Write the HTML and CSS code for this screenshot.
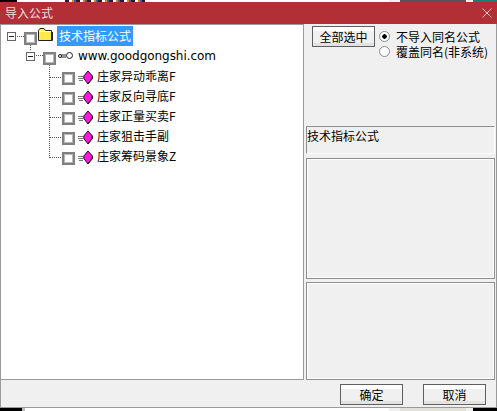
FILE: index.html
```html
<!DOCTYPE html>
<html lang="zh">
<head>
<meta charset="utf-8">
<title>导入公式</title>
<link rel="stylesheet" href="styles.css">
</head>
<body>
<div class="strip strip-top">
  <i class="seg s-black-a"></i><i class="seg s-white-a"></i><i class="seg s-bits"></i><i class="seg s-white-b"></i><i class="seg s-grey"></i><i class="seg s-dark"></i><i class="seg s-grey2"></i><i class="seg s-teal"></i>
</div>
<div class="window">
  <header class="titlebar">
    <span class="title">导入公式</span>
    <svg class="close" width="10" height="10" viewBox="0 0 10 10"><path d="M0.5 0.5L9.5 9.5M9.5 0.5L0.5 9.5" stroke="#e6c4c6" stroke-width="1" fill="none"/></svg>
  </header>
  <div class="main">
    <section class="tree">
      <svg class="tree-lines" width="80" height="140" viewBox="0 0 80 140">
        <g stroke="#555" stroke-width="1" stroke-dasharray="1 1" fill="none">
          <path d="M17 12.500H24"/>
          <path d="M30.500 21V27"/>
          <path d="M36 31.500H43"/>
          <path d="M49.500 41V134"/>
          <path d="M50 53.500H62M50 73.500H62M50 93.500H62M50 113.500H62M50 133.500H62"/>
        </g>
      </svg>
      <div class="row lvl-0">
        <span class="expander"></span>
        <span class="check"></span>
        <svg class="folder" width="16" height="13" viewBox="0 0 16 13">
          <path d="M0.500 12.500V2.500L2 0.500H6L7.500 2.500H13.500V12.500Z" fill="#ffe94d" stroke="#222"/>
          <path d="M14.500 4V12.500H2" stroke="#222" fill="none"/>
          <path d="M1 3.500H13" stroke="#fff"/>
        </svg>
        <span class="label selected">技术指标公式</span>
      </div>
      <div class="row lvl-1">
        <span class="expander"></span>
        <span class="check"></span>
        <svg class="key" width="16" height="8" viewBox="0 0 16 8">
          <circle cx="11.500" cy="3.500" r="3" fill="#fff" stroke="#222"/>
          <path d="M8 3H2.500M8 5H2.500" stroke="#222" fill="none"/>
          <circle cx="2" cy="4" r="1.500" fill="#fff" stroke="#222"/>
        </svg>
        <span class="label url">www.goodgongshi.com</span>
      </div>
      <div class="row lvl-2">
        <span class="check"></span>
        <svg class="gem" width="16" height="13" viewBox="0 0 16 13">
          <path d="M0 5.500H5M0 7.500H5M1 9.500H5" stroke="#777" fill="none"/>
          <path d="M10 0L14.500 5V7.500L10 13L5.800 7.500V5Z" fill="#ff16e0" stroke="#111" stroke-linejoin="miter"/>
          <path d="M14 5.500V7.500L10.500 12" stroke="#400" fill="none"/>
        </svg>
        <span class="label">庄家异动乖离F</span>
      </div>
      <div class="row lvl-2">
        <span class="check"></span>
        <svg class="gem" width="16" height="13" viewBox="0 0 16 13">
          <path d="M0 5.500H5M0 7.500H5M1 9.500H5" stroke="#777" fill="none"/>
          <path d="M10 0L14.500 5V7.500L10 13L5.800 7.500V5Z" fill="#ff16e0" stroke="#111" stroke-linejoin="miter"/>
          <path d="M14 5.500V7.500L10.500 12" stroke="#400" fill="none"/>
        </svg>
        <span class="label">庄家反向寻底F</span>
      </div>
      <div class="row lvl-2">
        <span class="check"></span>
        <svg class="gem" width="16" height="13" viewBox="0 0 16 13">
          <path d="M0 5.500H5M0 7.500H5M1 9.500H5" stroke="#777" fill="none"/>
          <path d="M10 0L14.500 5V7.500L10 13L5.800 7.500V5Z" fill="#ff16e0" stroke="#111" stroke-linejoin="miter"/>
          <path d="M14 5.500V7.500L10.500 12" stroke="#400" fill="none"/>
        </svg>
        <span class="label">庄家正量买卖F</span>
      </div>
      <div class="row lvl-2">
        <span class="check"></span>
        <svg class="gem" width="16" height="13" viewBox="0 0 16 13">
          <path d="M0 5.500H5M0 7.500H5M1 9.500H5" stroke="#777" fill="none"/>
          <path d="M10 0L14.500 5V7.500L10 13L5.800 7.500V5Z" fill="#ff16e0" stroke="#111" stroke-linejoin="miter"/>
          <path d="M14 5.500V7.500L10.500 12" stroke="#400" fill="none"/>
        </svg>
        <span class="label">庄家狙击手副</span>
      </div>
      <div class="row lvl-2">
        <span class="check"></span>
        <svg class="gem" width="16" height="13" viewBox="0 0 16 13">
          <path d="M0 5.500H5M0 7.500H5M1 9.500H5" stroke="#777" fill="none"/>
          <path d="M10 0L14.500 5V7.500L10 13L5.800 7.500V5Z" fill="#ff16e0" stroke="#111" stroke-linejoin="miter"/>
          <path d="M14 5.500V7.500L10.500 12" stroke="#400" fill="none"/>
        </svg>
        <span class="label">庄家筹码景象Z</span>
      </div>
    </section>
    <aside class="side">
      <div class="controls">
        <button class="btn btn-all" type="button">全部选中</button>
        <div class="radios">
          <div class="radio-row"><span class="radio on"></span><span>不导入同名公式</span></div>
          <div class="radio-row"><span class="radio"></span><span>覆盖同名(非系统)</span></div>
        </div>
      </div>
      <div class="box box-name">技术指标公式</div>
      <div class="box box-mid"></div>
      <div class="box box-low"></div>
    </aside>
  </div>
  <footer class="footer">
    <button class="btn" type="button">确定</button>
    <button class="btn" type="button">取消</button>
  </footer>
</div>
<div class="strip strip-bottom">
  <i class="seg b-black"></i><i class="seg b-grey"></i><i class="seg b-white"></i><i class="seg b-pale"></i><i class="seg b-mid"></i><i class="seg b-pale2"></i><i class="seg b-black2"></i>
</div>
</body>
</html>
```

FILE: styles.css
```css
* { box-sizing: border-box; }
html, body { margin: 0; padding: 0; }
body {
  width: 497px;
  height: 411px;
  overflow: hidden;
  background: #fff;
  font: 12px/14px "Noto Sans CJK SC", "Liberation Sans", sans-serif;
  color: #000;
  display: flex;
  flex-direction: column;
}

.strip { display: flex; flex: none; }
.strip-top { height: 2px; }
.strip-bottom { height: 3px; }
.seg { display: block; flex: none; height: 100%; }
.s-black-a { width: 17px; background: #000; }
.s-white-a { width: 48px; background: #fff; }
.s-bits { width: 80px; background: repeating-linear-gradient(90deg, #222 0 4px, #fff 4px 7px, #c98b2a 7px 9px, #2a62b0 9px 11px); }
.s-white-b { width: 244px; background: #fff; }
.s-grey { width: 11px; background: #f0f0f0; }
.s-dark { width: 66px; background: #555; }
.s-grey2 { width: 7px; background: #f0f0f0; }
.s-teal { width: 24px; background: #17807a; }
.b-black { width: 22px; background: #000; }
.b-grey { width: 3px; background: #bbb; }
.b-white { width: 364px; background: #fff; }
.b-pale { width: 11px; background: #f0f0f0; }
.b-mid { width: 66px; background: #e2e2da; }
.b-pale2 { width: 7px; background: #f0f0f0; }
.b-black2 { width: 24px; background: #000; }

.window {
  flex: none;
  height: 406px;
  display: flex;
  flex-direction: column;
  background: #f0f0f0;
  border: 1px solid #9a9a9a;
  border-top: 0;
}
.titlebar {
  flex: none;
  height: 22px;
  margin: 0 -1px;
  padding: 0 5px;
  background: #b22f35;
  display: flex;
  align-items: center;
  justify-content: space-between;
}
.title { color: #f3dfe0; font-size: 12px; line-height: 14px; }
.close { flex: none; margin-top: -1px; }

.main { flex: none; height: 356px; display: flex; }
.tree {
  position: relative;
  flex: none;
  width: 303px;
  padding-top: 2px;
  background: #fff;
  border: 1px solid #9a9a9a;
  border-left: 0;
}
.tree-lines { position: absolute; left: -1px; top: -1px; }
.row { height: 20px; display: flex; align-items: flex-start; position: relative; }
.lvl-0 { padding-left: 6px; margin-top: -1px; }
.lvl-1 { padding-left: 25px; }
.lvl-2 { padding-left: 61px; }
.expander {
  flex: none;
  width: 9px;
  height: 9px;
  margin-top: 6px;
  border: 1px solid #666;
  background: linear-gradient(#222, #222) center / 5px 1px no-repeat #fff;
}
.check {
  flex: none;
  width: 13px;
  height: 13px;
  margin-top: 6px;
  border: 2px solid #808080;
  background: #fff;
  box-shadow: inset 0 0 0 1px #b8b8b8;
}
.lvl-0 .check, .lvl-1 .check { margin-left: 8px; }
.folder { flex: none; margin: 2px 0 0 1px; }
.key { flex: none; margin: 6px 0 0 2px; }
.gem { flex: none; margin: 5px 0 0 3px; }
.label { flex: none; height: 20px; line-height: 20px; padding: 0 2px; margin-left: 3px; white-space: nowrap; }
.lvl-1 .label { margin-left: 2px; }
.lvl-2 .label { margin-left: 1px; line-height: 19px; }
.selected { background: #3399ff; color: #fff; }
.url { font-family: "DejaVu Sans", sans-serif; letter-spacing: -0.05px; }

.side {
  flex: 1;
  min-width: 0;
  padding: 0 1px 0 2px;
  display: flex;
  flex-direction: column;
}
.controls { flex: none; height: 102px; padding: 2px 0 0 6px; display: flex; align-items: flex-start; gap: 4px; }
.btn {
  flex: none;
  width: 63px;
  height: 21px;
  padding: 0;
  font: inherit;
  color: #000;
  border: 1px solid #5f5f5f;
  background: linear-gradient(#fff 0 4px, #f0f0f0 4px 16px, #e2e2e2 16px);
}
.radios { display: flex; flex-direction: column; padding-top: 3px; }
.radio-row { display: flex; align-items: center; gap: 6px; height: 15px; white-space: nowrap; }
.radio {
  flex: none;
  width: 11px;
  height: 11px;
  border: 1px solid #8a8a8a;
  border-radius: 50%;
  background: #fff;
}
.radio.on { background: radial-gradient(circle, #000 0 2px, #fff 2.5px); }

.box { flex: none; background: #f0f0f0; border: 1px solid #8e8e8e; }
.box-name { height: 28px; margin-bottom: 4px; padding-top: 2px; border-right-color: #fff; border-bottom-color: #fff; }
.box-mid, .box-low { box-shadow: inset -1px -1px 0 #fff, inset 1px 1px 0 #fff; }
.box-mid { height: 121px; margin-bottom: 3px; }
.box-low { height: 98px; }

.footer { flex: 1; display: flex; justify-content: flex-end; gap: 20px; padding: 4px 10px 0 0; }
```
